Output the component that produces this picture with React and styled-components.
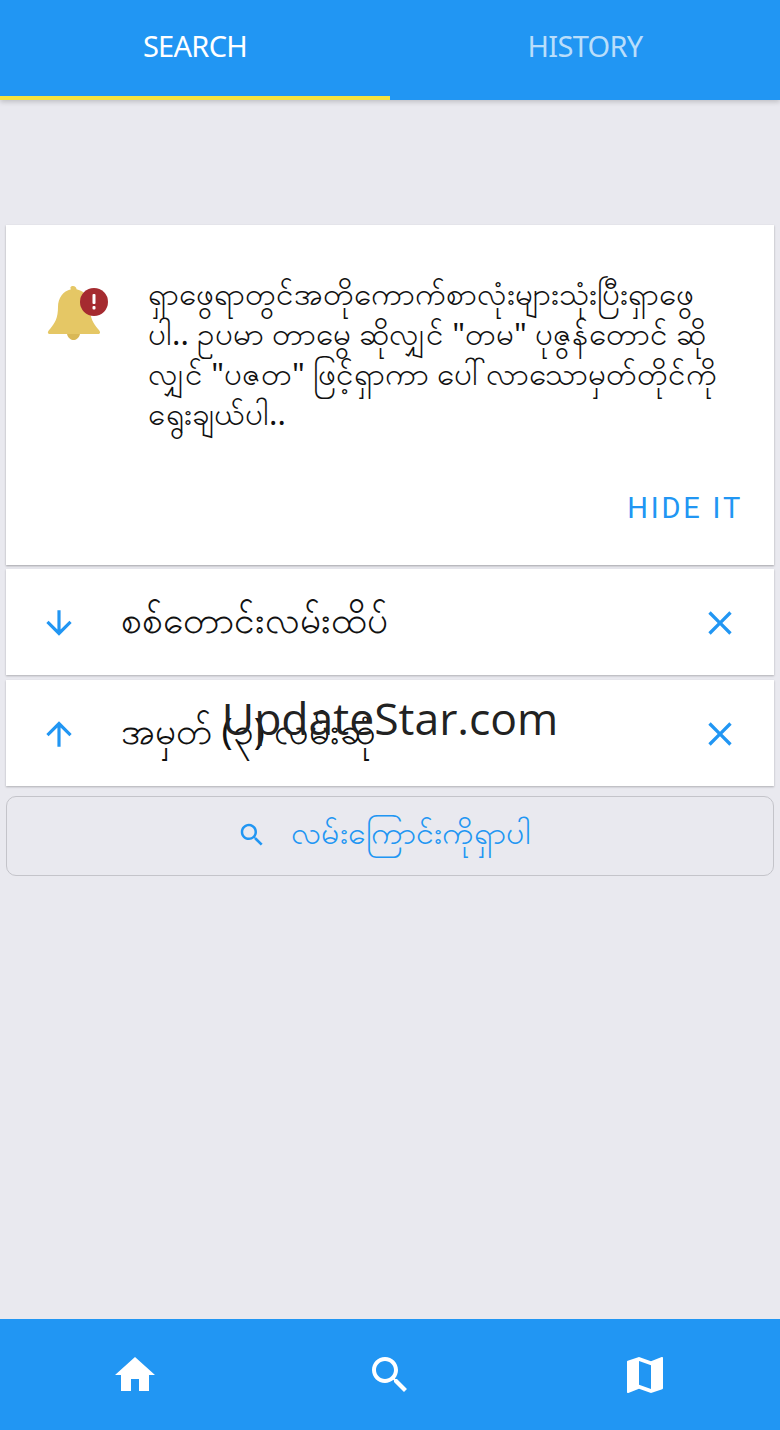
import React from "react";
import styled, { createGlobalStyle } from "styled-components";

const BLUE = "#2196f3";

const GlobalStyle = createGlobalStyle`
  html, body {
    margin: 0;
    padding: 0;
    background: #e9e9ef;
    font-family: "Noto Sans", "Roboto", sans-serif;
  }
`;

const Page = styled.div`
  position: relative;
  display: flex;
  flex-direction: column;
  width: 780px;
  height: 1430px;
  overflow: hidden;
  background: #e9e9ef;
`;

const TabBar = styled.div`
  display: grid;
  grid-template-columns: 1fr 1fr;
  height: 100px;
  background: ${BLUE};
  box-shadow: 0 2px 5px rgba(0, 0, 0, 0.18);
`;

const Tab = styled.div`
  display: flex;
  align-items: center;
  justify-content: center;
  padding-bottom: 5px;
  font-size: 29px;
  letter-spacing: -0.7px;
  color: ${(p) => (p.$active ? "#fff" : "rgba(255, 255, 255, 0.7)")};
  border-bottom: 4px solid ${(p) => (p.$active ? "#f6e33f" : "transparent")};
`;

const Content = styled.main`
  flex: 1;
  display: flex;
  flex-direction: column;
  padding: 125px 6px 0;
`;

const NoticeCard = styled.section`
  display: flex;
  flex-direction: column;
  height: 340px;
  box-sizing: border-box;
  padding: 48px 33px 0 41px;
  margin-bottom: 4px;
  background: #fff;
  box-shadow: 0 1px 2px rgba(0, 0, 0, 0.3);
`;

const NoticeBody = styled.div`
  display: flex;
  align-items: flex-start;
  gap: 39px;
`;

const BellWrap = styled.div`
  flex-shrink: 0;
  margin-top: 13px;
  line-height: 0;
`;

const NoticeText = styled.p`
  margin: 0;
  flex: 1;
  font-size: 31.3px;
  line-height: 40px;
  white-space: nowrap;
  color: #111;
`;

const HideButton = styled.div`
  margin-top: auto;
  margin-bottom: 41px;
  margin-right: -2px;
  align-self: flex-end;
  font-family: "Roboto", sans-serif;
  font-size: 29px;
  line-height: 32px;
  letter-spacing: 2.8px;
  color: ${BLUE};
`;

const RouteRow = styled.div`
  display: flex;
  align-items: center;
  height: 106px;
  box-sizing: border-box;
  padding: 1px 34px 0;
  margin-bottom: 5px;
  background: #fff;
  box-shadow: 0 1px 2px rgba(0, 0, 0, 0.25);
`;

const RouteName = styled.span`
  flex: 1;
  margin-left: 43px;
  padding-bottom: 8px;
  font-size: 37px;
  line-height: 50px;
  color: #111;
`;

const SearchButton = styled.div`
  display: flex;
  align-items: center;
  justify-content: center;
  gap: 24px;
  height: 80px;
  box-sizing: border-box;
  margin-top: 5px;
  padding: 0 13px 2px 0;
  border: 1px solid #c4c4ca;
  border-radius: 10px;
  font-size: 32px;
  color: ${BLUE};
`;

const BottomNav = styled.nav`
  display: grid;
  grid-template-columns: repeat(3, 1fr);
  height: 111px;
  padding: 0 8px;
  background: ${BLUE};
`;

const NavItem = styled.div`
  display: flex;
  align-items: center;
  justify-content: center;
`;

const Watermark = styled.div`
  position: absolute;
  left: 0;
  right: 0;
  top: 688px;
  text-align: center;
  font-family: "Open Sans", sans-serif;
  font-size: 44.5px;
  line-height: 60px;
  color: #222;
`;

const Icon = ({ d, size, color }) => (
  <svg width={size} height={size} viewBox="0 0 24 24" fill={color}>
    <path d={d} />
  </svg>
);

const ICONS = {
  down: "M20 12l-1.41-1.41L13 16.17V4h-2v12.17l-5.58-5.59L4 12l8 8 8-8z",
  up: "M4 12l1.41 1.41L11 7.83V20h2V7.83l5.58 5.59L20 12l-8-8-8 8z",
  close:
    "M19 6.41L17.59 5 12 10.59 6.41 5 5 6.41 10.59 12 5 17.59 6.41 19 12 13.41 17.59 19 19 17.59 13.41 12z",
  search:
    "M15.5 14h-.79l-.28-.27C15.41 12.59 16 11.11 16 9.5 16 5.91 13.09 3 9.5 3S3 5.91 3 9.5 5.91 16 9.5 16c1.61 0 3.09-.59 4.23-1.57l.27.28v.79l5 4.99L20.49 19l-4.99-5zm-6 0C7.01 14 5 11.99 5 9.5S7.01 5 9.5 5 14 7.01 14 9.5 11.99 14 9.5 14z",
  home: "M10 20v-6h4v6h5v-8h3L12 3 2 12h3v8z",
  map: "M20.5 3l-.16.03L15 5.1 9 3 3.36 4.9c-.21.07-.36.25-.36.48V20.5c0 .28.22.5.5.5l.16-.03L9 18.9l6 2.1 5.64-1.9c.21-.07.36-.25.36-.48V3.5c0-.28-.22-.5-.5-.5zM15 19l-6-2.11V5l6 2.11V19z",
};

const BellAlert = () => (
  <svg width="62" height="56" viewBox="0 0 62 56">
    <path
      fill="#e5c765"
      d="M26 0c2 0 3.500 1.500 3.500 3.200C38 5 43 12 43 21c0 11 3 16 8 22 2 2 3 4 1 5H2c-2-1-1-3 1-5 5-6 8-11 8-22 0-9 5-16 13-17.800C22.500 1.500 24 0 26 0z"
    />
    <path fill="#d9b856" d="M20 48h13c-1 4-4 6-6.500 6S21 52 20 48z" />
    <circle cx="47" cy="16" r="14" fill="#a52b30" />
    <rect x="45.500" y="8" width="3" height="10" rx="1" fill="#fff" />
    <rect x="45.500" y="20" width="3" height="3.500" rx="1" fill="#fff" />
  </svg>
);

const routes = [
  { dir: "down", name: "စစ်တောင်းလမ်းထိပ်" },
  { dir: "up", name: "အမှတ် (၃) လမ်းဆုံ" },
];

export default function App() {
  return (
    <Page>
      <GlobalStyle />
      <TabBar>
        <Tab $active>SEARCH</Tab>
        <Tab>HISTORY</Tab>
      </TabBar>
      <Content>
        <NoticeCard>
          <NoticeBody>
            <BellWrap><BellAlert /></BellWrap>
            <NoticeText>
              ရှာဖွေရာတွင်အတိုကောက်စာလုံးများသုံးပြီးရှာဖွေ<br />
              ပါ.. ဥပမာ တာမွေ ဆိုလျှင် "တမ" ပုဇွန်တောင် ဆို<br />
              လျှင် "ပဇတ" ဖြင့်ရှာကာ ပေါ်လာသောမှတ်တိုင်ကို<br />
              ရွေးချယ်ပါ..
            </NoticeText>
          </NoticeBody>
          <HideButton>HIDE IT</HideButton>
        </NoticeCard>
        {routes.map((r) => (
          <RouteRow key={r.dir}>
            <Icon d={ICONS[r.dir]} size={38} color={BLUE} />
            <RouteName>{r.name}</RouteName>
            <Icon d={ICONS.close} size={40} color={BLUE} />
          </RouteRow>
        ))}
        <SearchButton>
          <Icon d={ICONS.search} size={30} color={BLUE} />
          <span>လမ်းကြောင်းကိုရှာပါ</span>
        </SearchButton>
      </Content>
      <BottomNav>
        <NavItem><Icon d={ICONS.home} size={48} color="#fff" /></NavItem>
        <NavItem><Icon d={ICONS.search} size={48} color="#fff" /></NavItem>
        <NavItem><Icon d={ICONS.map} size={48} color="#fff" /></NavItem>
      </BottomNav>
      <Watermark>UpdateStar.com</Watermark>
    </Page>
  );
}
